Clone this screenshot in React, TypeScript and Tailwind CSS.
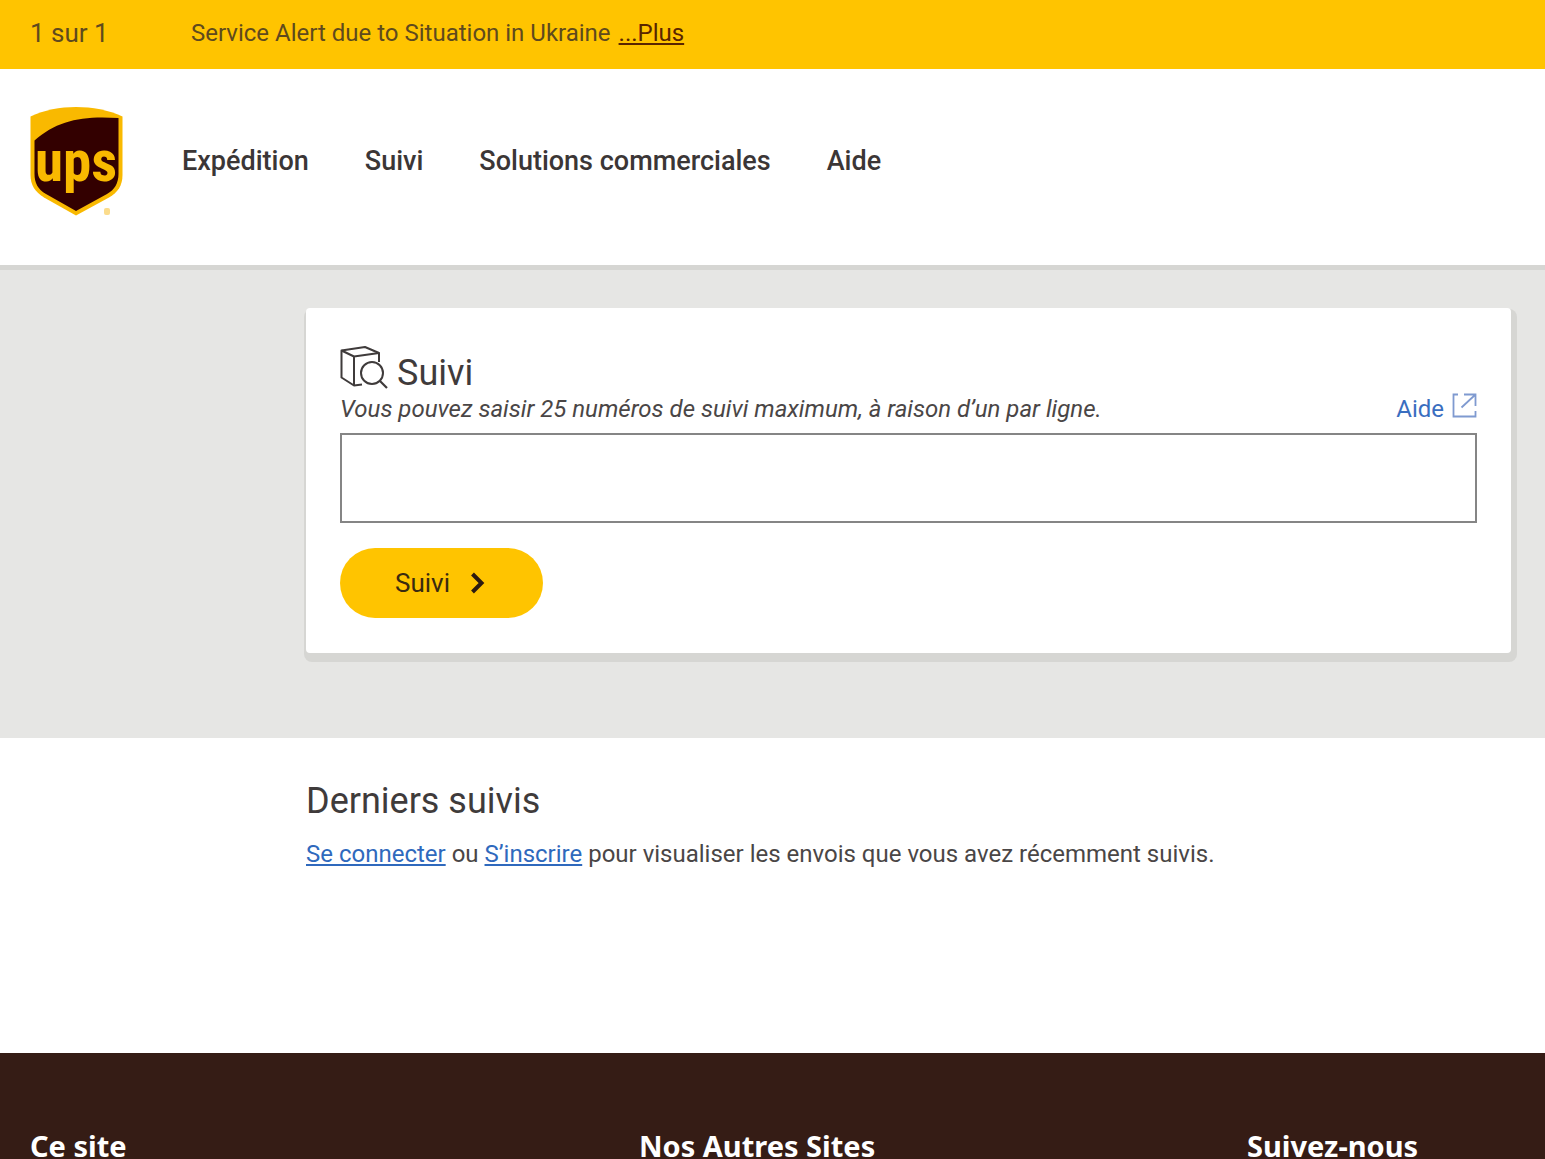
import { useState } from "react";

const navItems = ["Expédition", "Suivi", "Solutions commerciales", "Aide"];
const footerColumns = ["Ce site", "Nos Autres Sites", "Suivez-nous"];

function UpsLogo() {
  return (
    <svg viewBox="0 0 94 110" className="h-[110px] w-[94px]" role="img" aria-label="UPS">
      <path
        d="M0.5 10.500C14 4 30 1 46 1S79 4 92.500 10.500V69C92.500 79 88 86.500 79 91.500L46 109.500L14 91.500C5 86 0.500 79 0.500 69Z"
        fill="#f9b900"
      />
      <path
        d="M4.500 34.500C27 14.500 52 9.500 88.500 12V68C88.500 77 84.500 84 77 88L46 105L16 88C8 83.500 4.500 77 4.500 68Z"
        fill="#330000"
      />
      <text
        x="46"
        y="75"
        textAnchor="middle"
        fill="#f9b900"
        fontSize="57"
        fontWeight="700"
        fontFamily="'Liberation Sans Narrow', 'Roboto Condensed', 'Open Sans', sans-serif"
      >
        ups
      </text>
      <rect x="74" y="102" width="6" height="7" rx="2" fill="#fbdc8c" />
    </svg>
  );
}

function PackageSearchIcon() {
  return (
    <svg
      viewBox="0 0 48 43"
      className="h-[43px] w-12 self-start"
      fill="none"
      stroke="#3f3b3b"
      strokeWidth="2"
      strokeLinejoin="round"
      aria-hidden="true"
    >
      <path d="M22 38.500L14 39.500L1.500 31.500V4.500L25 1L39 7V16" />
      <path d="M1.500 4.500L14 10.500L39 7M14 10.500V39.500" />
      <circle cx="32" cy="27" r="11" />
      <path d="M40 35L47 42" strokeWidth="2.200" />
    </svg>
  );
}

function ExternalIcon() {
  return (
    <svg viewBox="0 0 25 25" className="mb-2 h-[25px] w-[25px]" fill="none" stroke="#7f9ad0" strokeWidth="1.800" aria-hidden="true">
      <path d="M6 1.500H1.500V23.500H23.500V18" />
      <path d="M12 1.500H23.500V13M23.500 1.500L9.500 14.500" />
    </svg>
  );
}

function AlertBar() {
  return (
    <div className="flex items-center bg-[#ffc400] px-[30px] pt-[17px] pb-5 text-2xl text-[#5f4a1e]">
      <span className="w-[161px] shrink-0 text-[26px] leading-8">1 sur 1</span>
      <p>
        Service Alert due to Situation in Ukraine
        <a href="#alert" className="ml-2 text-[#5a2500] underline">
          ...Plus
        </a>
      </p>
    </div>
  );
}

function Header() {
  return (
    <header className="flex items-center border-b-5 border-[#d6d6d3] px-[30px] pt-[37px] pb-[49px]">
      <a href="#home">
        <UpsLogo />
      </a>
      <nav className="ml-[58px] flex gap-14 text-[27px] font-medium text-[#3b3636]">
        {navItems.map((item) => (
          <a key={item} href="#nav">
            {item}
          </a>
        ))}
      </nav>
    </header>
  );
}

function TrackingForm() {
  const [numbers, setNumbers] = useState("");

  return (
    <section className="bg-[#e6e6e4] pt-[38px] pr-[34px] pb-[85px] pl-[306px]">
      <form
        onSubmit={(e) => e.preventDefault()}
        className="rounded-sm bg-white px-[34px] pt-[38px] pb-[35px] shadow-[2px_5px_0_4px_#d6d6d3]"
      >
        <h1 className="flex h-[47px] items-end gap-[9px] text-4xl leading-10 text-[#3f3b3b]">
          <PackageSearchIcon />
          Suivi
        </h1>
        <div className="flex h-8 items-center justify-between text-2xl text-[#4a4646]">
          <label htmlFor="tracking-numbers" className="italic">
            Vous pouvez saisir 25 numéros de suivi maximum, à raison d’un par ligne.
          </label>
          <a href="#help" className="flex items-center gap-2 text-[#3a6ec0]">
            Aide
            <ExternalIcon />
          </a>
        </div>
        <textarea
          id="tracking-numbers"
          value={numbers}
          onChange={(e) => setNumbers(e.target.value)}
          className="mt-2 block h-[90px] w-full resize-none border-2 border-[#858585] px-4 py-2 text-2xl outline-none"
        />
        <button
          type="submit"
          className="mt-[25px] flex h-[70px] items-center gap-5 rounded-full bg-[#ffc400] pr-[58px] pl-[55px] text-[26px] text-[#3a2a10]"
        >
          Suivi
          <svg viewBox="0 0 15 22" className="h-[22px] w-[15px]" fill="none" stroke="#2c1a10" strokeWidth="4" aria-hidden="true">
            <path d="M2.500 2L11.500 11L2.500 20" />
          </svg>
        </button>
      </form>
    </section>
  );
}

function RecentTracking() {
  return (
    <section className="pt-[41px] pb-[183px] pl-[306px] text-[#4a4646]">
      <h2 className="text-4xl leading-[44px] text-[#3f3b3b]">Derniers suivis</h2>
      <p className="mt-[15px] text-2xl">
        <a href="#login" className="text-[#2f69bd] underline">
          Se connecter
        </a>{" "}
        ou{" "}
        <a href="#signup" className="text-[#2f69bd] underline">
          S’inscrire
        </a>{" "}
        pour visualiser les envois que vous avez récemment suivis.
      </p>
    </section>
  );
}

function Footer() {
  return (
    <footer className="grid grid-cols-[609px_608px_1fr] bg-[#351c15] px-[30px] pt-[77px] font-['Noto_Sans',sans-serif] text-[29px] leading-8 font-bold text-white">
      {footerColumns.map((title) => (
        <h3 key={title}>{title}</h3>
      ))}
    </footer>
  );
}

export default function App() {
  return (
    <div className="min-h-screen bg-white font-[Roboto,sans-serif]">
      <AlertBar />
      <Header />
      <main>
        <TrackingForm />
        <RecentTracking />
      </main>
      <Footer />
    </div>
  );
}
